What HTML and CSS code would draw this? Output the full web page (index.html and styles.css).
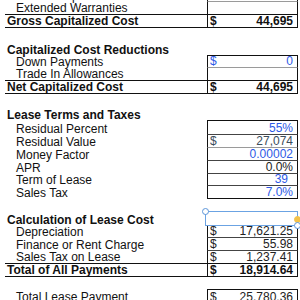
FILE: index.html
```html
<!DOCTYPE html>
<html>
<head>
<meta charset="utf-8">
<link rel="stylesheet" href="styles.css">
</head>
<body>
<div class="sheet">
  <div class="row"><div class="lbl ind">Dealer Acquisition Fee</div><div class="val boxed sep-light blue"><span>$</span><span>695</span></div></div>
  <div class="row rule"><div class="lbl ind">Extended Warranties</div><div class="val boxed"></div></div>
  <div class="row rule total"><div class="lbl bold">Gross Capitalized Cost</div><div class="val boxed"><span>$</span><span>44,695</span></div></div>
  <div class="row tall"><div class="lbl"></div><div class="val"></div></div>
  <div class="row tall"><div class="lbl bold">Capitalized Cost Reductions</div><div class="val cap"></div></div>
  <div class="row short"><div class="lbl ind">Down Payments</div><div class="val boxed sep-light blue"><span>$</span><span>0</span></div></div>
  <div class="row rule"><div class="lbl ind">Trade In Allowances</div><div class="val boxed"></div></div>
  <div class="row rule total"><div class="lbl bold">Net Capitalized Cost</div><div class="val boxed"><span>$</span><span>44,695</span></div></div>
  <div class="row"><div class="lbl"></div><div class="val"></div></div>
  <div class="row tall"><div class="lbl bold">Lease Terms and Taxes</div><div class="val cap"></div></div>
  <div class="row tall"><div class="lbl ind">Residual Percent</div><div class="val boxed sep right blue"><span>55%</span></div></div>
  <div class="row"><div class="lbl ind">Residual Value</div><div class="val boxed sep-light slate"><span>$</span><span>27,074</span></div></div>
  <div class="row"><div class="lbl ind">Money Factor</div><div class="val boxed sep right blue"><span>0.00002</span></div></div>
  <div class="row"><div class="lbl ind">APR</div><div class="val boxed sep right"><span>0.0%</span></div></div>
  <div class="row short"><div class="lbl ind">Term of Lease</div><div class="val boxed sep right blue pad"><span>39</span></div></div>
  <div class="row"><div class="lbl ind">Sales Tax</div><div class="val boxed cap right blue"><span>7.0%</span></div></div>
  <div class="row"><div class="lbl"></div><div class="val"></div></div>
  <div class="row tall"><div class="lbl bold">Calculation of Lease Cost</div><div class="val cap anchor"><div class="sel"><i class="handle tl"></i><i class="handle mr"></i><i class="handle br"></i></div></div></div>
  <div class="row short"><div class="lbl ind">Depreciation</div><div class="val boxed sep"><span>$</span><span>17,621.25</span></div></div>
  <div class="row"><div class="lbl ind">Finance or Rent Charge</div><div class="val boxed sep"><span>$</span><span>55.98</span></div></div>
  <div class="row rule"><div class="lbl ind">Sales Tax on Lease</div><div class="val boxed"><span>$</span><span>1,237.41</span></div></div>
  <div class="row rule total"><div class="lbl bold">Total of All Payments</div><div class="val boxed"><span>$</span><span>18,914.64</span></div></div>
  <div class="row"><div class="lbl"></div><div class="val cap"></div></div>
  <div class="row"><div class="lbl ind">Total Lease Payment</div><div class="val boxed"><span>$</span><span>25,780.36</span></div></div>
</div>
</body>
</html>
```
FILE: styles.css
```css
html, body {
  margin: 0;
  padding: 0;
  background: #fff;
}
body {
  font-family: "Liberation Sans", Arial, sans-serif;
  font-size: 12px;
  color: #111;
  width: 300px;
  height: 300px;
  overflow: hidden;
}
.sheet {
  margin: -11px 0 0 5px;
  width: 293px;
}
.row {
  display: grid;
  grid-template-columns: 202px 91px;
  height: 13px;
}
.row.tall { height: 14px; }
.row.short { height: 12px; }
.lbl, .val {
  box-sizing: border-box;
  display: flex;
  align-items: flex-end;
  line-height: 11px;
  white-space: nowrap;
  min-width: 0;
}
.lbl { padding-left: 2px; }
.lbl.ind { padding-left: 11px; }
.bold { font-weight: bold; }
.val {
  justify-content: space-between;
  padding: 0 4px 0 2px;
  color: #222;
}
.val.right { justify-content: flex-end; }
.val.pad { padding-right: 9px; }
.total .val { font-weight: bold; color: #111; }
.boxed {
  border-left: 1px solid #111;
  border-right: 1px solid #111;
}
.cap { border-bottom: 1px solid #111; }
.sep { border-bottom: 1px solid #444; }
.sep-light { border-bottom: 1px solid #9a9a9a; }
.rule > .lbl, .rule > .val { border-bottom: 1px solid #111; }
.blue { color: #2d5ae6; }
.slate { color: #3b4d5c; }
.anchor { position: relative; }
.sel {
  position: absolute;
  left: -2px;
  top: -1px;
  right: 0;
  bottom: -1px;
  border: 1px solid #6ba3e3;
}
.handle {
  position: absolute;
  width: 5px;
  height: 5px;
  border: 1px solid #5b95d9;
  border-radius: 50%;
  background: #fff;
}
.handle.tl { left: -4px; top: -4px; }
.handle.br { right: -4px; bottom: -4px; }
.handle.mr {
  right: -4px;
  top: 50%;
  margin-top: -3px;
  background: #f3c24a;
  border-color: #f3c24a;
}
```
